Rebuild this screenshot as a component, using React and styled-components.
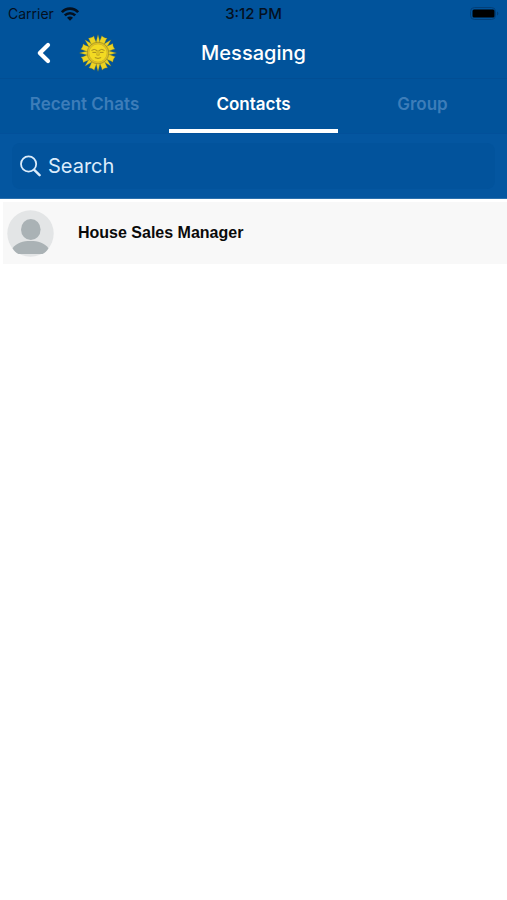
import { useState } from "react";
import styled, { createGlobalStyle } from "styled-components";

const GlobalStyle = createGlobalStyle`
  * {
    box-sizing: border-box;
  }

  body {
    margin: 0;
    background-color: #ffffff;
    font-family: Inter, "Liberation Sans", sans-serif;
  }

  button,
  input {
    font-family: inherit;
  }
`;

const Header = styled.header`
  background-color: #01539b;
`;

const StatusBar = styled.div`
  display: grid;
  grid-template-columns: 1fr auto 1fr;
  align-items: center;
  height: 27px;
  padding: 0 8px;
  font-size: 14px;
  color: #04101f;
`;

const Carrier = styled.div`
  display: flex;
  align-items: center;
  gap: 7px;
`;

const Clock = styled.div`
  font-size: 15px;
  font-weight: 500;
`;

const BatteryIcon = styled.svg`
  justify-self: end;
`;

const NavBar = styled.div`
  display: grid;
  grid-template-columns: 1fr auto 1fr;
  align-items: center;
  height: 51px;
  padding: 0 32px;
`;

const NavLeft = styled.div`
  display: flex;
  align-items: center;
  gap: 23px;
`;

const BackButton = styled.button`
  display: flex;
  padding: 0;
  border: none;
  background: none;
  cursor: pointer;
`;

const Title = styled.h1`
  margin: 0;
  font-size: 20px;
  line-height: 24px;
  font-weight: 500;
  color: #ffffff;
`;

const Tabs = styled.nav`
  display: grid;
  grid-template-columns: repeat(3, 1fr);
  height: 55px;
  border-top: 1px solid #024e94;
`;

const Tab = styled.button`
  padding: 0;
  border: none;
  border-bottom: 4px solid ${props => (props.$active ? "#ffffff" : "transparent")};
  background: none;
  font-size: 17px;
  font-weight: 600;
  color: ${props => (props.$active ? "#ffffff" : "#3d7db9")};
  cursor: pointer;
`;

const SearchArea = styled.div`
  padding: 9px 12px;
  background-color: #0456a0;
  border-top: 1px solid #02509a;
  border-bottom: 1px solid #2a70ae;
`;

const SearchBox = styled.label`
  display: flex;
  align-items: center;
  gap: 7px;
  height: 46px;
  padding: 0 8px;
  border-radius: 8px;
  background-color: #02539c;
`;

const SearchInput = styled.input`
  flex: 1;
  min-width: 0;
  padding: 0;
  border: none;
  outline: none;
  background: none;
  font-size: 20px;
  color: #ffffff;

  &::placeholder {
    color: #dcecfb;
    opacity: 1;
  }
`;

const ContactList = styled.ul`
  margin: 0;
  padding: 3px 0 0 3px;
  list-style: none;
`;

const ContactItem = styled.li`
  display: flex;
  align-items: center;
  gap: 24px;
  height: 62px;
  padding: 0 4px;
  background-color: #f8f8f8;
`;

const ContactName = styled.span`
  font-family: "Liberation Sans", Arial, sans-serif;
  font-size: 16px;
  font-weight: 700;
  color: #0a0a0a;
`;

const WifiIcon = () => (
  <svg width="18" height="14" viewBox="0 0 18 14" fill="none" stroke="#04101f">
    <path d="M0.9 5.2C5.2 0.5 12.8 0.5 17.1 5.2" strokeWidth="2.7" />
    <path d="M3.8 8.4C6.6 5.5 11.4 5.5 14.2 8.4" strokeWidth="2.6" />
    <path d="M9 13.8L6 10.8C7.6 9.2 10.4 9.2 12 10.8Z" fill="#04101f" stroke="none" />
  </svg>
);

const Battery = () => (
  <BatteryIcon width="29" height="14" viewBox="0 0 29 14">
    <rect x="0.5" y="0.5" width="25" height="12" rx="4" fill="none" stroke="#033f78" />
    <rect x="2.5" y="2.5" width="22" height="8" rx="1.5" fill="#000000" />
    <path d="M27 4.5C28.8 5.2 28.8 7.8 27 8.5Z" fill="#033f78" />
  </BatteryIcon>
);

const BackIcon = () => (
  <svg width="24" height="24" viewBox="0 0 24 24" fill="none">
    <path
      d="M16 4L7.8 12L16 20"
      stroke="#ffffff"
      strokeWidth="4.2"
      strokeLinecap="round"
      strokeLinejoin="round"
    />
  </svg>
);

const rays = [0, 45, 90, 135, 180, 225, 270, 315];

const SunLogo = () => (
  <svg width="38" height="38" viewBox="-19 -19 38 38">
    <g fill="#ecd322" stroke="#5d6a35" strokeWidth="0.3">
      {rays.map((angle) => (
        <g key={angle} transform={`rotate(${angle})`}>
          <path d="M-2.5 -9L0 -18.6L2.5 -9Z" />
          <path
            d="M-2.1 -9C-3.6 -11.8 -2.6 -13.6 -3.2 -17.4C-0.6 -16.4 1.4 -16.6 2.8 -17.4C1.8 -14.6 3 -12.4 2.1 -9Z"
            transform="rotate(22.5)"
          />
        </g>
      ))}
    </g>
    <circle r="10.8" fill="#dcc228" stroke="#8c7a22" strokeWidth="0.6" />
    <circle r="9" fill="#f3da22" stroke="#bd9c22" strokeWidth="0.4" />
    <g fill="none" stroke="#94791e" strokeWidth="0.8" strokeLinecap="round">
      <path d="M-6.2 -2.8Q-3.6 -4.6 -1.4 -2.8M1.4 -2.8Q3.6 -4.6 6.2 -2.8" />
      <path d="M-5.2 -0.6H-2.4M2.4 -0.6H5.2" />
      <path d="M-0.8 -2.6L-1.2 2.2H1.2L0.8 -2.6" strokeWidth="0.5" />
      <path d="M-2.8 4.8Q0 6.2 2.8 4.8" />
    </g>
  </svg>
);

const SearchIcon = () => (
  <svg width="21" height="22" viewBox="0 0 21 22" fill="none" stroke="#dcecfb">
    <circle cx="8.6" cy="9" r="7.6" strokeWidth="1.8" />
    <path d="M14.2 14.8L19.6 20.2" strokeWidth="2.4" strokeLinecap="round" />
  </svg>
);

const Avatar = () => (
  <svg width="47" height="47" viewBox="0 0 47 47">
    <circle cx="23.5" cy="23.5" r="23.2" fill="#e3e5e6" />
    <ellipse cx="23.8" cy="19.5" rx="9.8" ry="10.5" fill="#aab2b5" />
    <path d="M5.5 38.2C10 32.8 16 31 23.5 31S37 32.8 41.5 38.2C39.8 41 38 42.6 35.6 44H11.4C9 42.6 7.2 41 5.5 38.2Z" fill="#aab2b5" />
  </svg>
);

const tabs = ["Recent Chats", "Contacts", "Group"];

const contacts = [{ id: 1, name: "House Sales Manager" }];

export default function App() {
  const [activeTab, setActiveTab] = useState("Contacts");
  const [search, setSearch] = useState("");

  const visibleContacts = contacts.filter((contact) =>
    contact.name.toLowerCase().includes(search.toLowerCase())
  );

  return (
    <>
      <GlobalStyle />
      <Header>
        <StatusBar>
          <Carrier>
            Carrier
            <WifiIcon />
          </Carrier>
          <Clock>3:12 PM</Clock>
          <Battery />
        </StatusBar>
        <NavBar>
          <NavLeft>
            <BackButton aria-label="Back">
              <BackIcon />
            </BackButton>
            <SunLogo />
          </NavLeft>
          <Title>Messaging</Title>
        </NavBar>
        <Tabs>
          {tabs.map((tab) => (
            <Tab key={tab} $active={tab === activeTab} onClick={() => setActiveTab(tab)}>
              {tab}
            </Tab>
          ))}
        </Tabs>
        <SearchArea>
          <SearchBox>
            <SearchIcon />
            <SearchInput
              type="text"
              aria-label="Search"
              placeholder="Search"
              value={search}
              onChange={(e) => setSearch(e.target.value)}
            />
          </SearchBox>
        </SearchArea>
      </Header>
      <main>
        <ContactList>
          {visibleContacts.map((contact) => (
            <ContactItem key={contact.id}>
              <Avatar />
              <ContactName>{contact.name}</ContactName>
            </ContactItem>
          ))}
        </ContactList>
      </main>
    </>
  );
}
